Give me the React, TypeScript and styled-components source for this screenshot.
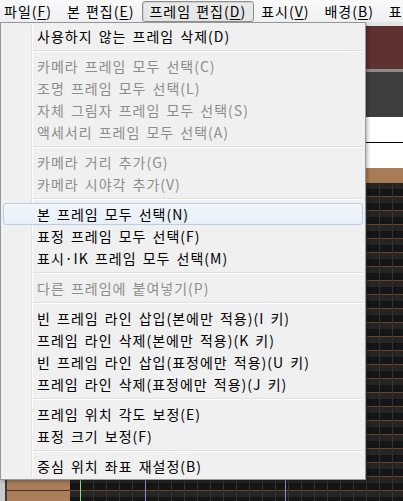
import styled, { createGlobalStyle } from 'styled-components';

const GlobalStyle = createGlobalStyle`
    html, body {
        margin: 0;
        padding: 0;
        background: #f0f0f0;
    }
    body {
        font-family: "Noto Sans CJK KR", "Noto Sans", sans-serif;
        font-size: 14px;
    }
`;

const Screen = styled.div`
    position: relative;
    width: 403px;
    height: 501px;
    overflow: hidden;
    display: flex;
    flex-direction: column;
`;

const MenuBar = styled.div`
    height: 22px;
    display: flex;
    align-items: center;
    background: linear-gradient(#f8f9fa, #eef0f2);
    white-space: nowrap;
    letter-spacing: 1px;
    word-spacing: 1px;
`;

const BarItem = styled.div<{ $open?: boolean }>`
    height: 19px;
    display: flex;
    align-items: center;
    padding: 0 7px 0 6px;
    border: 1px solid ${(p) => (p.$open ? '#8e8f8f' : 'transparent')};
    border-radius: 3px;
    background: ${(p) => (p.$open ? 'linear-gradient(#e9e9e9, #e3e4e5)' : 'transparent')};
    box-shadow: ${(p) => (p.$open ? 'inset 1px 1px 0 #d2d2d2' : 'none')};
    color: #000;
    line-height: 1;
    flex-shrink: 0;
    &:first-child {
        margin-left: -3px;
    }
`;

const Key = styled.span`
    text-decoration: underline;
    text-underline-offset: 2px;
`;

const Workspace = styled.div`
    flex: 1;
    display: flex;
    flex-direction: column;
    background: #d6d6d6;
`;

const TopEdge = styled.div`
    height: 4px;
    background: #e4e4e4;
`;

const Band = styled.div<{ $h: number; $bg: string }>`
    height: ${(p) => p.$h}px;
    background: ${(p) => p.$bg};
`;

const WhitePanel = styled.div`
    height: 51px;
    background: #fff;
    display: flex;
    flex-direction: column;
    justify-content: center;
    &::after {
        content: '';
        height: 1px;
        background: #000;
    }
`;

const Timeline = styled.div`
    flex: 1;
    display: flex;
`;

const LeftEdge = styled.div`
    width: 5px;
    background: #c9c9c9;
    border-right: 2px solid #3a3a3a;
`;

const LabelColumn = styled.div`
    width: 63px;
    background-color: #a97e58;
    background-image: repeating-linear-gradient(
        to bottom,
        transparent 0 13px,
        #4a3220 13px 14px
    );
`;

const FrameGrid = styled.div`
    flex: 1;
    background-color: #151515;
    background-image:
        linear-gradient(to right, transparent 10px, #7fe07f 10px 11px, transparent 11px),
        repeating-linear-gradient(to right, transparent 0 75px, #8a86d8 75px 76px, transparent 76px 140px),
        repeating-linear-gradient(to right, transparent 0 10px, #333 10px 11px, transparent 11px 13px),
        repeating-linear-gradient(to bottom, #252525 0 6px, #151515 6px 13px, #6e4225 13px 14px);
`;

const Menu = styled.div`
    position: absolute;
    top: 22px;
    left: 0;
    width: 364px;
    padding: 2px 0;
    background: #f0f0f0;
    border: 1px solid #979797;
    box-shadow: 2px 2px 3px rgba(0, 0, 0, 0.25);
    &::before {
        content: '';
        position: absolute;
        top: 2px;
        bottom: 2px;
        left: 30px;
        width: 1px;
        background: #e2e3e3;
        box-shadow: 1px 0 0 #fff;
    }
`;

const Item = styled.div<{ $disabled?: boolean; $hover?: boolean }>`
    position: relative;
    height: 22px;
    margin: 0 2px;
    padding-left: 33px;
    display: flex;
    align-items: center;
    white-space: nowrap;
    letter-spacing: 1px;
    word-spacing: 2px;
    color: ${(p) => (p.$disabled ? '#8d8d8d' : '#000')};
    border: 1px solid ${(p) => (p.$hover ? '#b4cde8' : 'transparent')};
    border-radius: 3px;
    box-sizing: border-box;
    background: ${(p) => (p.$hover ? 'linear-gradient(#f2f6fb, #e8eff8)' : 'transparent')};
    z-index: 1;
`;

const Separator = styled.div`
    height: 8px;
    display: flex;
    flex-direction: column;
    justify-content: center;
    padding-left: 32px;
    padding-right: 2px;
    &::after {
        content: '';
        height: 1px;
        background: #e0e0e0;
        border-bottom: 1px solid #fff;
    }
`;

interface IMenuItem {
    label: string;
    disabled?: boolean;
    hover?: boolean;
}

const groups: IMenuItem[][] = [
    [{ label: '사용하지 않는 프레임 삭제(D)' }],
    [
        { label: '카메라 프레임 모두 선택(C)', disabled: true },
        { label: '조명 프레임 모두 선택(L)', disabled: true },
        { label: '자체 그림자 프레임 모두 선택(S)', disabled: true },
        { label: '액세서리 프레임 모두 선택(A)', disabled: true },
    ],
    [
        { label: '카메라 거리 추가(G)', disabled: true },
        { label: '카메라 시야각 추가(V)', disabled: true },
    ],
    [
        { label: '본 프레임 모두 선택(N)', hover: true },
        { label: '표정 프레임 모두 선택(F)' },
        { label: '표시·IK 프레임 모두 선택(M)' },
    ],
    [{ label: '다른 프레임에 붙여넣기(P)', disabled: true }],
    [
        { label: '빈 프레임 라인 삽입(본에만 적용)(I 키)' },
        { label: '프레임 라인 삭제(본에만 적용)(K 키)' },
        { label: '빈 프레임 라인 삽입(표정에만 적용)(U 키)' },
        { label: '프레임 라인 삭제(표정에만 적용)(J 키)' },
    ],
    [{ label: '프레임 위치 각도 보정(E)' }, { label: '표정 크기 보정(F)' }],
    [{ label: '중심 위치 좌표 재설정(B)' }],
];

const bar = [
    { name: '파일', key: 'F' },
    { name: '본 편집', key: 'E' },
    { name: '프레임 편집', key: 'D', open: true },
    { name: '표시', key: 'V' },
    { name: '배경', key: 'B' },
    { name: '표', key: '' },
];

function App() {
    return (
        <Screen>
            <GlobalStyle />
            <MenuBar>
                {bar.map((b) => (
                    <BarItem key={b.name} $open={b.open}>
                        {b.name}
                        {b.key && (
                            <>
                                (<Key>{b.key}</Key>)
                            </>
                        )}
                    </BarItem>
                ))}
            </MenuBar>
            <Workspace>
                <TopEdge />
                <Band $h={43} $bg="#5e3030" />
                <Band $h={3} $bg="#8c8c8c" />
                <Band $h={45} $bg="#3e3e3e" />
                <WhitePanel />
                <Band $h={15} $bg="#a87c57" />
                <Timeline>
                    <LeftEdge />
                    <LabelColumn />
                    <FrameGrid />
                </Timeline>
            </Workspace>
            <Menu>
                {groups.map((g, i) => (
                    <div key={i}>
                        {i > 0 && <Separator />}
                        {g.map((it) => (
                            <Item key={it.label} $disabled={it.disabled} $hover={it.hover}>
                                {it.label}
                            </Item>
                        ))}
                    </div>
                ))}
            </Menu>
        </Screen>
    );
}

export default App;
